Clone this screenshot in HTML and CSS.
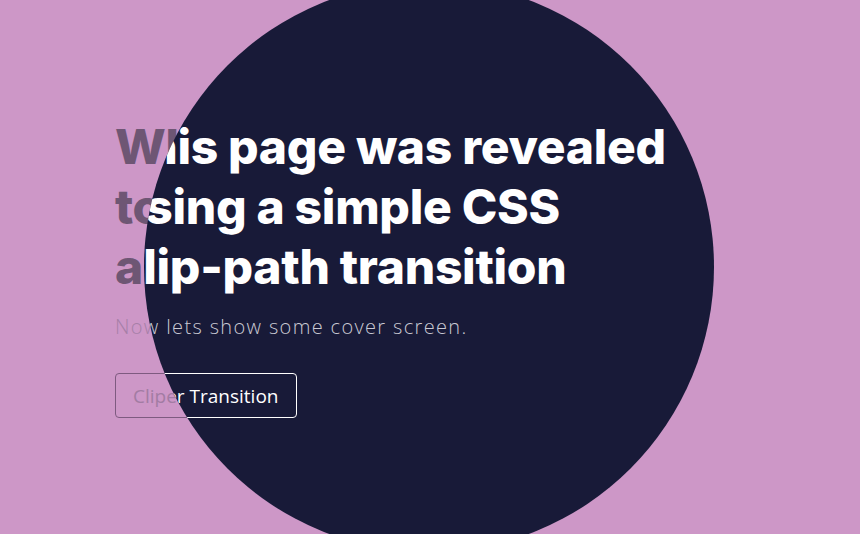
FILE: index.html
```html
<!DOCTYPE html>
<html lang="en">
<head>
<meta charset="utf-8">
<title>Clip-path reveal</title>
<link rel="stylesheet" href="styles.css">
</head>
<body>
<main class="stage">
  <section class="layer layer-cover">
    <div class="content">
      <h1 class="title">What a cover<br>to show off<br>all at once</h1>
      <p class="lead">Now lets show some cover screen.</p>
      <div><button class="btn" type="button">Cliper Transition</button></div>
    </div>
  </section>
  <section class="layer layer-reveal">
    <div class="content">
      <h1 class="title">This page was revealed<br>using a simple CSS<br>clip-path transition</h1>
      <p class="lead">Now lets show some cover screen.</p>
      <div><button class="btn" type="button">Cliper Transition</button></div>
    </div>
  </section>
</main>
</body>
</html>
```
FILE: styles.css
```css
* { box-sizing: border-box; }
html, body { margin: 0; padding: 0; }
body { width: 860px; height: 534px; overflow: hidden; }

.stage {
  position: relative;
  width: 860px;
  height: 534px;
  background: #cd97c7;
}

.layer {
  position: absolute;
  inset: 0;
}

.layer-cover { background: #cd97c7; color: #6e5674; }
.layer-reveal {
  background: #181a38;
  color: #ffffff;
  clip-path: circle(285px at 429px 267px);
}

.content {
  display: flex;
  flex-direction: column;
  padding: 117px 0 0 115px;
}

.title {
  margin: 0;
  font-family: Inter, "Noto Sans", sans-serif;
  font-weight: 800;
  font-size: 48px;
  line-height: 60px;
  letter-spacing: -0.3px;
}

.lead {
  margin: 15px 0 0;
  font-family: "Open Sans", "Noto Sans", sans-serif;
  font-weight: 300;
  font-size: 20px;
  line-height: 30px;
  letter-spacing: 1.35px;
}

.btn {
  margin-top: 31px;
  height: 45px;
  padding: 0 17px;
  border-radius: 4px;
  background: transparent;
  font-family: "Open Sans", "Noto Sans", sans-serif;
  font-weight: 400;
  font-size: 19px;
  cursor: pointer;
}

.layer-cover .lead { color: #a67fa7; }
.layer-cover .btn { color: #a27ca3; border: 1.5px solid #7e5a80; }

.layer-reveal .lead { color: #c9c9d3; }
.layer-reveal .btn { color: #ffffff; border: 1.5px solid #ffffff; }
```
